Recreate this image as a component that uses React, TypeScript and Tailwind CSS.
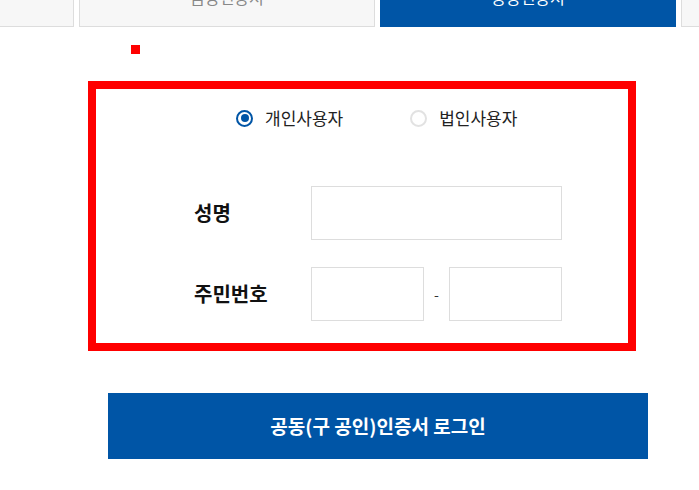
import React from 'react';

const tabs = [
  { label: '간편인증서', active: false },
  { label: '금융인증서', active: false },
  { label: '공동인증서', active: true },
  { label: '사업자인증서', active: false },
];

const Radio: React.FC<{ label: string; checked?: boolean; className?: string }> = ({
  label,
  checked = false,
  className = '',
}) => (
  <label className={`flex items-center gap-[12px] ${className}`}>
    <span
      className={`flex h-[17px] w-[17px] items-center justify-center rounded-full border-2 ${
        checked ? 'border-[#0055a6]' : 'border-[#e2e2e2]'
      }`}
    >
      {checked && <span className="h-[8px] w-[8px] rounded-full bg-[#0055a6]" />}
    </span>
    <span className="text-[17px] leading-[24px] text-[#222]">{label}</span>
  </label>
);

export default function App() {
  return (
    <div
      className="h-[490px] w-full overflow-hidden bg-white"
      style={{ fontFamily: '"Noto Sans CJK KR", "Noto Sans", sans-serif' }}
    >
      <div className="-mt-[33px] -ml-[222px] flex gap-[5px]">
        {tabs.map((t) => (
          <div
            key={t.label}
            className={`flex h-[60px] w-[296px] shrink-0 items-center justify-center text-[16px] ${
              t.active
                ? 'bg-[#0055a6] text-white'
                : 'border border-[#dddddd] bg-[#f7f7f7] text-[#888]'
            }`}
          >
            {t.label}
          </div>
        ))}
      </div>

      <div className="mt-[18px] ml-[131px] h-[9px] w-[9px] bg-[#ff0000]" />

      <div className="mt-[27px] ml-[88px] h-[270px] w-[548px] border-[8px] border-[#ff0000]">
        <div className="mt-[17px] flex h-[24px] items-center pl-[140px]">
          <Radio label="개인사용자" checked />
          <Radio label="법인사용자" className="ml-[67px]" />
        </div>

        <div className="mt-[56px] flex items-center pl-[98px]">
          <span className="w-[117px] text-[20px] font-bold text-[#111]">성명</span>
          <input className="h-[54px] w-[251px] border border-[#dddddd] outline-none" />
        </div>

        <div className="mt-[27px] flex items-center pl-[98px]">
          <span className="w-[117px] text-[20px] font-bold text-[#111]">주민번호</span>
          <input className="h-[54px] w-[113px] border border-[#dddddd] outline-none" />
          <span className="flex w-[25px] justify-center text-[14px] text-[#333]">-</span>
          <input className="h-[54px] w-[113px] border border-[#dddddd] outline-none" />
        </div>
      </div>

      <button className="mt-[42px] ml-[108px] flex h-[66px] w-[540px] items-center justify-center bg-[#0055a6] text-[19px] font-semibold text-white">
        공동(구 공인)인증서 로그인
      </button>
    </div>
  );
}
